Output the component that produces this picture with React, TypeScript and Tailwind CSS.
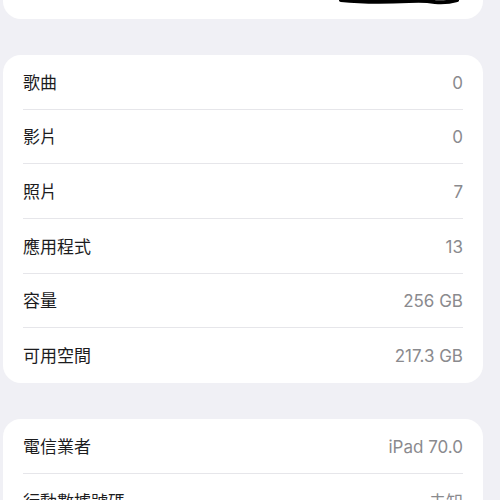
const font = { fontFamily: '"Inter", "Noto Sans CJK TC", sans-serif' }

const storage = [
  { label: '歌曲', value: '0' },
  { label: '影片', value: '0' },
  { label: '照片', value: '7' },
  { label: '應用程式', value: '13' },
  { label: '容量', value: '256 GB' },
  { label: '可用空間', value: '217.3 GB' },
]

const network = [
  { label: '電信業者', value: 'iPad 70.0' },
  { label: '行動數據號碼', value: '未知' },
]

function Row({ label, value, last }: { label: string; value: string; last?: boolean }) {
  return (
    <div className={`mx-[20px] h-[54.67px] flex items-center justify-between pt-[3px] ${last ? '' : 'border-b border-[#e6e6ea]'}`}>
      <span className="text-[17px] text-[#1c1c1e]">{label}</span>
      <span className="text-[17px] text-[#8a8a8e]">{value}</span>
    </div>
  )
}

export default function App() {
  return (
    <div className="w-[500px] h-[500px] overflow-hidden bg-[#f0f0f5]" style={font}>
      {/* top card (cut off) */}
      <div className="ml-[3px] w-[480px] h-[19px] bg-white rounded-b-[18px] flex justify-end pr-[20px]">
        <svg width="120" height="6" viewBox="0 0 120 6" className="mr-[4px]">
          <path d="M2 0 Q30 3 70 1 Q85 0 96 2 Q108 3 118 0" stroke="#000" strokeWidth="4" fill="none" strokeLinecap="round" />
        </svg>
      </div>

      <div className="ml-[3px] w-[480px] mt-[36px] bg-white rounded-[18px]">
        {storage.map((r, i) => (
          <Row key={r.label} {...r} last={i === storage.length - 1} />
        ))}
      </div>

      <div className="ml-[3px] w-[480px] mt-[36px] bg-white rounded-[18px]">
        {network.map((r, i) => (
          <Row key={r.label} {...r} last={i === network.length - 1} />
        ))}
      </div>
    </div>
  )
}
